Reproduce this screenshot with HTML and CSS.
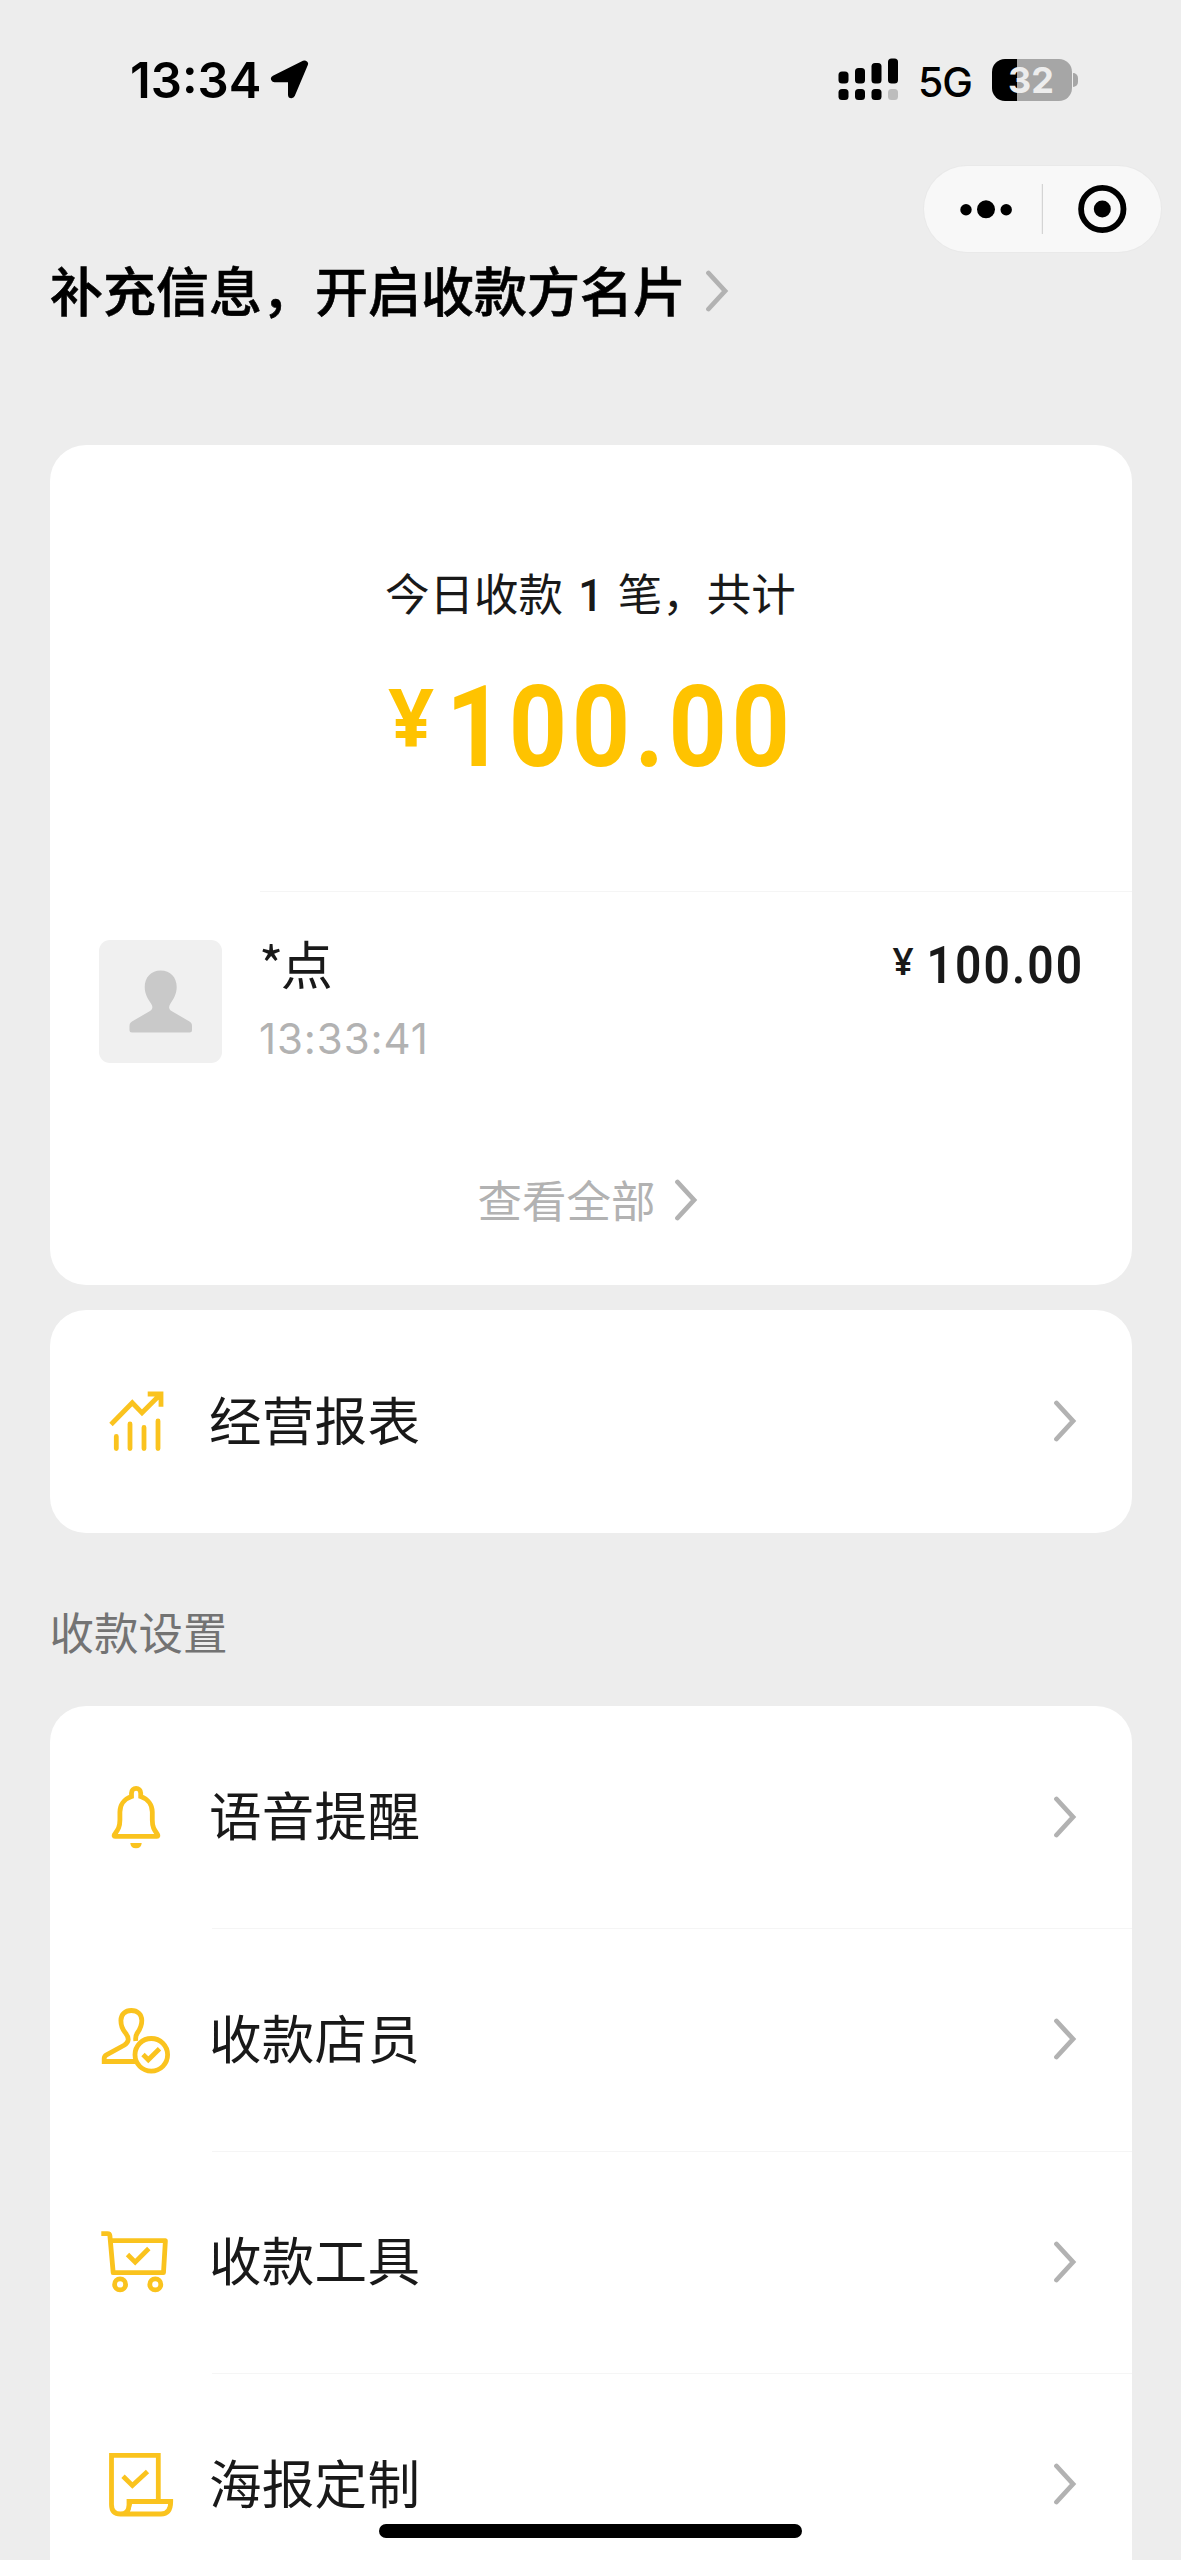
FILE: index.html
```html
<!DOCTYPE html>
<html lang="zh-CN">
<head>
<meta charset="utf-8">
<title>收款小账本</title>
<link rel="stylesheet" href="styles.css">
</head>
<body>
<div class="screen">
  <header class="status">
    <span class="clock">13:34</span>
    <svg class="locate" width="40" height="40" viewBox="0 0 40 40"><path d="M34.5 4 4.5 18.8H21.5V34.7Z" fill="#000" stroke="#000" stroke-width="7" stroke-linejoin="round"/></svg>
    <svg class="signal" width="61" height="44" viewBox="0 0 61 44">
      <rect x="0.5" y="13.5" width="10" height="12" rx="3.5"/><rect x="17" y="10" width="10" height="15.5" rx="3.5"/><rect x="33.5" y="5" width="10" height="20.5" rx="3.5"/><rect x="50" y="0.5" width="10" height="25" rx="3.5"/>
      <rect x="0.5" y="31" width="10" height="11" rx="3.5"/><rect x="17" y="31" width="10" height="11" rx="3.5"/><rect x="33.5" y="31" width="10" height="11" rx="3.5"/><rect x="50" y="31" width="10" height="11" rx="3.5" fill="#bdbdbd"/>
    </svg>
    <span class="network">5G</span>
    <span class="battery"><span class="level">32</span></span>
    <span class="nub"></span>
  </header>

  <div class="capsule">
    <svg width="237" height="86" viewBox="0 0 237 86">
      <circle cx="42" cy="43.7" r="5.7"/><circle cx="62" cy="43.3" r="9"/><circle cx="82.2" cy="43.7" r="5.7"/>
      <path d="M118.4 18V68" stroke="#d4d4d4" stroke-width="1.2"/>
      <circle cx="178.3" cy="43" r="21.2" fill="none" stroke="#000" stroke-width="5.8"/><circle cx="178.3" cy="43" r="8.5"/>
    </svg>
  </div>

  <h1 class="headline">补充信息，开启收款方名片<svg class="chevron" width="24" height="44" viewBox="0 0 24 44"><path d="M2.500 4 19 22 2.500 40"/></svg></h1>

  <section class="card summary">
    <p class="count">今日收款<b>1</b>笔，共计</p>
    <p class="total"><span class="yen">¥</span><span class="digits">100.00</span></p>
    <div class="record">
      <svg class="avatar" width="123" height="123" viewBox="0 0 123 123"><path fill="#c9c9c9" d="M61.7 30.5C71.500 30.500 77.700 37.500 77.700 47C77.700 54 74.500 59 71.500 63.500C69.500 66.500 69.500 69 72.500 71L90.500 81.500C92.500 82.800 93 84 93 86V90Q93 92.500 90.500 92.500H33Q30.500 92.500 30.500 90V86C30.500 84 31 82.800 33 81.500L51 71C54 69 54 66.500 52 63.500C49 59 45.700 54 45.700 47C45.700 37.500 52 30.500 61.700 30.500Z"/></svg>
      <div class="payer"><span class="name">*点</span><span class="time">13:33:41</span></div>
      <div class="amount"><span class="yen">¥</span><span class="digits">100.00</span></div>
    </div>
    <div class="more">查看全部<svg class="chevron" width="24" height="44" viewBox="0 0 24 44"><path d="M2.500 4 19 22 2.500 40"/></svg></div>
  </section>

  <section class="card">
    <div class="item">
      <svg class="icon" width="84" height="80" viewBox="0 0 84 80"><path d="M19 43.500 40.300 21.800 50 31.800 68 13.800M55.700 13H69V25.800"/><path stroke="none" fill="#fac31e" d="M60 12H70V22Z"/><path d="M24.300 55.500V67.500M38 43V67.500M52 46.500V67.500M66 40V67.500" stroke-linecap="round"/></svg>
      <span class="label">经营报表</span>
      <svg class="chevron" width="24" height="44" viewBox="0 0 24 44"><path d="M2.500 4 19 22 2.500 40"/></svg>
    </div>
  </section>

  <h2 class="group">收款设置</h2>

  <section class="card menu">
    <div class="item">
      <svg class="icon" width="84" height="80" viewBox="0 0 84 80"><path d="M39.500 19.500C32 22 27.900 28 27.900 35V43C27.900 50 26 52.500 22.500 57.500Q21.500 59.300 23 59.300H65Q66.500 59.300 65.500 57.500C62 52.500 60.300 50 60.300 43V35C60.300 28 56 22 48.700 19.500V16A4.600 4.600 0 0 0 39.500 16Z"/><path stroke="none" fill="#fac31e" d="M38.300 66H49.700C49.500 69.500 47.500 71.300 44 71.300S38.500 69.500 38.300 66Z"/></svg>
      <span class="label">语音提醒</span>
      <svg class="chevron" width="24" height="44" viewBox="0 0 24 44"><path d="M2.500 4 19 22 2.500 40"/></svg>
    </div>
    <div class="item">
      <svg class="icon" width="84" height="80" viewBox="0 0 84 80"><path d="M43.800 42C43.300 38.500 43.500 36.500 45.300 34C47.800 30.500 49.800 27.500 49.800 21.500C49.800 15.500 45.500 11.500 39.300 11.500S28.900 15.500 28.900 21.500C28.900 27.500 30.500 30.500 33.500 34C37.500 39 37 43 32.500 46L14.500 55.800Q12.200 57 12.200 59.500V62.500H44"/><circle cx="59.300" cy="55.800" r="16.300"/><path d="M51 55.500 56.300 60.800 67.500 49.800"/></svg>
      <span class="label">收款店员</span>
      <svg class="chevron" width="24" height="44" viewBox="0 0 24 44"><path d="M2.500 4 19 22 2.500 40"/></svg>
    </div>
    <div class="item">
      <svg class="icon" width="84" height="80" viewBox="0 0 84 80"><path d="M9.300 11.700H15.500Q17.700 11.700 17.900 13.800L21.200 50.700H71.500L73.400 18.700H19" stroke-linejoin="round"/><circle cx="28.100" cy="62.400" r="5.500"/><circle cx="63.300" cy="62.400" r="5.500"/><path d="M35.500 32.500 43.200 40.200 56.800 26.500"/></svg>
      <span class="label">收款工具</span>
      <svg class="chevron" width="24" height="44" viewBox="0 0 24 44"><path d="M2.500 4 19 22 2.500 40"/></svg>
    </div>
    <div class="item">
      <svg class="icon" width="84" height="80" viewBox="0 0 84 80"><path d="M66.300 57.500V11.400H19.500V60.500C19.500 66.500 22.500 70 28.500 70H69C75 70 78.700 66 78.700 57.500H37V61C37 66.500 34 70 28.500 70"/><path stroke="none" fill="#fac31e" d="M35 57H41L37 70H29C33 69 35 66 35 61Z"/><path d="M31 32.300 40.400 41.500 55.500 27.500"/></svg>
      <span class="label">海报定制</span>
      <svg class="chevron" width="24" height="44" viewBox="0 0 24 44"><path d="M2.500 4 19 22 2.500 40"/></svg>
    </div>
  </section>
  <div class="home-bar"></div>
</div>
</body>
</html>
```

FILE: styles.css
```css
* { box-sizing: border-box; }

body {
  margin: 0;
  background: #ededed;
  color: #191919;
  font-family: "Noto Sans CJK SC", sans-serif;
}

h1, h2, p { margin: 0; font-weight: 400; }
svg { display: block; flex: none; }

.screen {
  position: relative;
  width: 1181px;
  height: 2560px;
  overflow: hidden;
}

.status {
  display: flex;
  align-items: center;
  height: 166px;
  padding: 0 103px 6px 130px;
  color: #000;
  font-family: Inter, sans-serif;
}
.clock { width: 140px; font-size: 49px; font-weight: 600; letter-spacing: 0; }
.signal { margin-left: auto; }
.network { width: 74px; margin-left: 19px; padding-top: 3px; font-size: 41px; font-weight: 500; letter-spacing: -1px; }
.battery {
  display: flex;
  align-items: center;
  width: 80px;
  height: 42px;
  padding-left: 16px;
  border-radius: 13px;
  background: linear-gradient(to right, #000 25px, #a6a6a6 25px);
}
.level { color: #ededed; font-size: 36px; font-weight: 700; }
.nub { width: 5px; height: 14px; margin-left: 1px; border-radius: 0 5px 5px 0; background: #a6a6a6; }

.capsule {
  width: 237px;
  height: 86px;
  margin-left: 924px;
  border-radius: 43px;
  background: #f8f8f8;
  box-shadow: 0 0 0 1px #e9e9e9;
}

.headline {
  display: flex;
  align-items: center;
  height: 54px;
  margin: 10px 0 129px 50px;
  color: #000;
  font-size: 53px;
  font-weight: 500;
  -webkit-text-stroke: 0.6px #000;
  line-height: 54px;
}
.headline .chevron { margin: 4px 0 0 19.500px; }
.chevron path { fill: none; stroke: #b2b2b2; stroke-width: 4.800; stroke-linecap: round; }

.card {
  width: 1082px;
  margin-left: 49.500px;
  border-radius: 36px;
  background: #fff;
}

.summary { height: 840px; padding-top: 119.500px; }
.count { text-align: center; font-size: 44.500px; line-height: 54px; }
.count b { margin: 0 15px; font-family: Roboto, sans-serif; font-weight: 500; font-size: 43.500px; }
.total {
  display: flex;
  justify-content: center;
  height: 114px;
  margin-top: 47px;
  color: #ffc300;
  font-family: Roboto, sans-serif;
  font-size: 113px;
  font-weight: 700;
  line-height: 114px;
}
.yen { font-family: "Noto Sans", sans-serif; }
.total .yen { margin: 5px 12px 0 0; font-size: 80px; line-height: 80px; }
.total .digits {
  margin-right: -40px;
  letter-spacing: 5px;
  transform: scaleX(0.9);
  transform-origin: left;
}

.record {
  display: flex;
  height: 222px;
  margin: 106px 0 0 49.500px;
}
.avatar { margin-top: 49.500px; border-radius: 11px; background: #f0f0f0; }
.payer {
  display: flex;
  flex-direction: column;
  flex: 1;
  gap: 22.500px;
  margin-left: 38px;
  padding-top: 44px;
  border-top: 1px solid #f5f5f5;
}
.name { margin-left: -1px; font-size: 52px; line-height: 54px; letter-spacing: -2.500px; }
.time { margin-left: -1px; color: #b2b2b2; font-family: Inter, sans-serif; font-size: 42px; line-height: 54px; letter-spacing: 0.900px; }
.amount {
  display: flex;
  padding: 46px 50px 0 0;
  border-top: 1px solid #f5f5f5;
  font-family: Roboto, sans-serif;
  font-size: 52.500px;
  font-weight: 600;
  line-height: 54px;
}
.amount .yen { margin: 4px -9px 0 0; font-size: 37px; line-height: 37px; }
.amount .digits {
  margin-right: -2.400px;
  letter-spacing: 2.400px;
  transform: scaleX(0.88);
  transform-origin: right;
}

.more {
  display: flex;
  justify-content: center;
  align-items: center;
  height: 54px;
  margin: 59px 0 0 -5px;
  color: #b2b2b2;
  font-size: 44.500px;
  line-height: 54px;
}
.more .chevron { margin: 3px 0 0 19px; }

.summary + .card { margin-top: 25px; }

.item {
  display: flex;
  align-items: center;
  height: 222.500px;
  padding: 0 54px 0 42.500px;
}
.icon { fill: none; stroke: #fac31e; stroke-width: 4.800; }
.label { flex: 1; margin-left: 33px; padding-bottom: 7px; font-size: 52.500px; line-height: 54px; letter-spacing: 0.300px; }

.menu .item + .item {
  background: linear-gradient(#f5f5f5, #f5f5f5) 162.500px 0 / 100% 1px no-repeat;
}

.group {
  margin: 71px 0 48px 49.500px;
  color: #737373;
  font-size: 44.500px;
  line-height: 54px;
}

.home-bar {
  position: absolute;
  left: 379px;
  bottom: 22px;
  width: 423px;
  height: 14px;
  border-radius: 7px;
  background: #000;
}
```
